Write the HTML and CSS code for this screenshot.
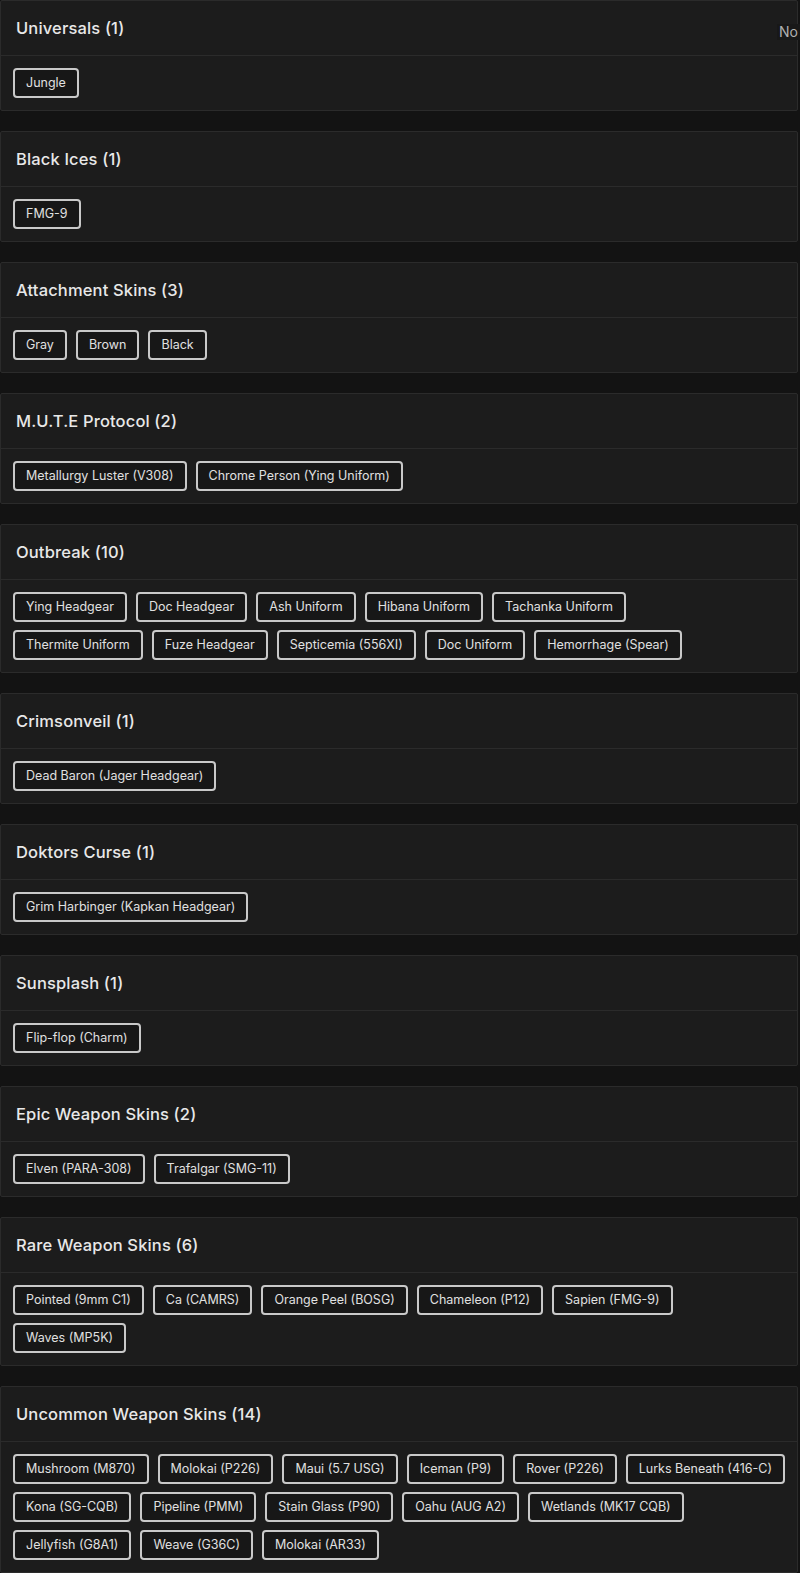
FILE: index.html
```html
<!DOCTYPE html>
<html lang="en">
<head>
<meta charset="utf-8">
<title>Skins</title>
<link rel="stylesheet" href="styles.css">
</head>
<body>
<main class="list">
  <section class="card">
    <header class="card-head"><h2 class="card-title">Universals (1)</h2><span class="status">No</span></header>
    <div class="card-body">
      <div class="row"><span class="chip">Jungle</span></div>
    </div>
  </section>
  <section class="card">
    <header class="card-head"><h2 class="card-title">Black Ices (1)</h2></header>
    <div class="card-body">
      <div class="row"><span class="chip">FMG-9</span></div>
    </div>
  </section>
  <section class="card">
    <header class="card-head"><h2 class="card-title">Attachment Skins (3)</h2></header>
    <div class="card-body">
      <div class="row"><span class="chip">Gray</span><span class="chip">Brown</span><span class="chip">Black</span></div>
    </div>
  </section>
  <section class="card">
    <header class="card-head"><h2 class="card-title">M.U.T.E Protocol (2)</h2></header>
    <div class="card-body">
      <div class="row"><span class="chip">Metallurgy Luster (V308)</span><span class="chip">Chrome Person (Ying Uniform)</span></div>
    </div>
  </section>
  <section class="card">
    <header class="card-head"><h2 class="card-title">Outbreak (10)</h2></header>
    <div class="card-body">
      <div class="row"><span class="chip">Ying Headgear</span><span class="chip">Doc Headgear</span><span class="chip">Ash Uniform</span><span class="chip">Hibana Uniform</span><span class="chip">Tachanka Uniform</span></div>
      <div class="row"><span class="chip">Thermite Uniform</span><span class="chip">Fuze Headgear</span><span class="chip">Septicemia (556XI)</span><span class="chip">Doc Uniform</span><span class="chip">Hemorrhage (Spear)</span></div>
    </div>
  </section>
  <section class="card">
    <header class="card-head"><h2 class="card-title">Crimsonveil (1)</h2></header>
    <div class="card-body">
      <div class="row"><span class="chip">Dead Baron (Jager Headgear)</span></div>
    </div>
  </section>
  <section class="card">
    <header class="card-head"><h2 class="card-title">Doktors Curse (1)</h2></header>
    <div class="card-body">
      <div class="row"><span class="chip">Grim Harbinger (Kapkan Headgear)</span></div>
    </div>
  </section>
  <section class="card">
    <header class="card-head"><h2 class="card-title">Sunsplash (1)</h2></header>
    <div class="card-body">
      <div class="row"><span class="chip">Flip-flop (Charm)</span></div>
    </div>
  </section>
  <section class="card">
    <header class="card-head"><h2 class="card-title">Epic Weapon Skins (2)</h2></header>
    <div class="card-body">
      <div class="row"><span class="chip">Elven (PARA-308)</span><span class="chip">Trafalgar (SMG-11)</span></div>
    </div>
  </section>
  <section class="card">
    <header class="card-head"><h2 class="card-title">Rare Weapon Skins (6)</h2></header>
    <div class="card-body">
      <div class="row"><span class="chip">Pointed (9mm C1)</span><span class="chip">Ca (CAMRS)</span><span class="chip">Orange Peel (BOSG)</span><span class="chip">Chameleon (P12)</span><span class="chip">Sapien (FMG-9)</span></div>
      <div class="row"><span class="chip">Waves (MP5K)</span></div>
    </div>
  </section>
  <section class="card">
    <header class="card-head"><h2 class="card-title">Uncommon Weapon Skins (14)</h2></header>
    <div class="card-body">
      <div class="row"><span class="chip">Mushroom (M870)</span><span class="chip">Molokai (P226)</span><span class="chip">Maui (5.7 USG)</span><span class="chip">Iceman (P9)</span><span class="chip">Rover (P226)</span><span class="chip">Lurks Beneath (416-C)</span></div>
      <div class="row"><span class="chip">Kona (SG-CQB)</span><span class="chip">Pipeline (PMM)</span><span class="chip">Stain Glass (P90)</span><span class="chip">Oahu (AUG A2)</span><span class="chip">Wetlands (MK17 CQB)</span></div>
      <div class="row"><span class="chip">Jellyfish (G8A1)</span><span class="chip">Weave (G36C)</span><span class="chip">Molokai (AR33)</span></div>
    </div>
  </section>
</main>
</body>
</html>
```

FILE: styles.css
```css
html, body {
  margin: 0;
  padding: 0;
  background: #131313;
  overflow: hidden;
}
body {
  font-family: Inter, "Open Sans", sans-serif;
  color: #e4e4e4;
}
.list {
  width: 798px;
  display: flex;
  flex-direction: column;
  gap: 20px;
}
.card {
  background: #1c1c1c;
  border: 1px solid #2b2b2b;
  border-radius: 2px;
}
.card-head {
  height: 54px;
  padding: 0 16px 0 15px;
  display: flex;
  align-items: center;
  justify-content: space-between;
  border-bottom: 1px solid #2b2b2b;
  position: relative;
}
.card-title {
  margin: 0;
  font-size: 16.5px;
  font-weight: 500;
  letter-spacing: 0.15px;
  color: #e8e8e8;
}
.status {
  position: absolute;
  left: 776px;
  top: 23px;
  height: 16px;
  line-height: 16px;
  padding-left: 2px;
  padding-right: 2px;
  font-size: 14px;
  color: #b0b0b0;
  background: #181818;
  white-space: nowrap;
}
.card-body {
  padding: 12px;
  display: flex;
  flex-direction: column;
  row-gap: 8px;
}
.row {
  display: flex;
  column-gap: 9px;
}
.chip {
  display: inline-block;
  box-sizing: border-box;
  height: 30px;
  line-height: 26px;
  padding: 0 11px;
  border: 2px solid #c9c9c9;
  border-radius: 4px;
  background: #171717;
  color: #e0e0e0;
  font-size: 12.5px;
  white-space: nowrap;
}
```
